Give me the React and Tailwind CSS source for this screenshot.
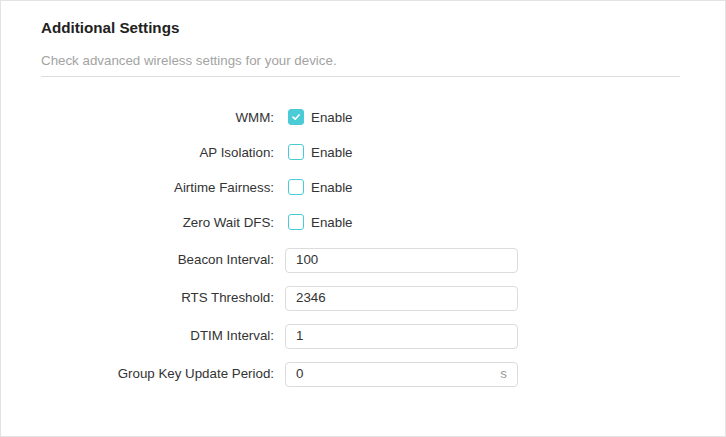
import { useState } from "react";

function CheckRow({ label, checked, onToggle }) {
  return (
    <div className="flex h-[35px] items-center">
      <div className="w-[273px] text-right">{label}</div>
      <button
        onClick={onToggle}
        className="ml-[14px] flex items-center gap-[7px]"
      >
        <span
          className={`flex h-[16px] w-[16px] items-center justify-center rounded-[3px] border ${
            checked ? "border-[#4acbd6] bg-[#4acbd6]" : "border-[#4acbd6] bg-white"
          }`}
        >
          {checked && (
            <svg width="10" height="10" viewBox="0 0 10 10">
              <path
                d="M2 5.2 L4.2 7.2 L8 3"
                fill="none"
                stroke="white"
                strokeWidth="1.7"
                strokeLinecap="round"
                strokeLinejoin="round"
              />
            </svg>
          )}
        </span>
        <span>Enable</span>
      </button>
    </div>
  );
}

function InputRow({ label, value, unit }) {
  return (
    <div className="flex h-[38px] items-center">
      <div className="w-[273px] text-right">{label}</div>
      <div className="ml-[11px] flex h-[25px] w-[233px] items-center rounded-[4px] border border-[#dcdcdc] bg-white px-[10px]">
        <input
          defaultValue={value}
          className="min-w-0 flex-1 bg-transparent text-[13.33px] text-[#333] outline-none"
        />
        {unit && <span className="ml-2 text-[#999]">{unit}</span>}
      </div>
    </div>
  );
}

export default function App() {
  const [opts, setOpts] = useState({ wmm: true, ap: false, air: false, dfs: false });
  const toggle = (k) => setOpts({ ...opts, [k]: !opts[k] });

  return (
    <div
      className="h-[437px] w-[726px] border border-[#e3e3e3] bg-white text-[13.33px] text-[#333]"
      style={{ fontFamily: '"Liberation Sans", Arial, sans-serif' }}
    >
      {/* Cabecera */}
      <div className="ml-[40px] w-[639px] border-b border-[#dddddd] pt-[17px] pb-[5px]">
        <h2 className="h-[20px] text-[15.2px] font-bold leading-[20px] text-[#222]">
          Additional Settings
        </h2>
        <p className="mt-[13px] h-[20px] leading-[20px] text-[#a3a3a3]">
          Check advanced wireless settings for your device.
        </p>
      </div>

      <div className="mt-[23px]">
        <CheckRow label="WMM:" checked={opts.wmm} onToggle={() => toggle("wmm")} />
        <CheckRow label="AP Isolation:" checked={opts.ap} onToggle={() => toggle("ap")} />
        <CheckRow label="Airtime Fairness:" checked={opts.air} onToggle={() => toggle("air")} />
        <CheckRow label="Zero Wait DFS:" checked={opts.dfs} onToggle={() => toggle("dfs")} />

        <div className="mt-[1px]">
          <InputRow label="Beacon Interval:" value="100" />
          <InputRow label="RTS Threshold:" value="2346" />
          <InputRow label="DTIM Interval:" value="1" />
          <InputRow label="Group Key Update Period:" value="0" unit="s" />
        </div>
      </div>
    </div>
  );
}
